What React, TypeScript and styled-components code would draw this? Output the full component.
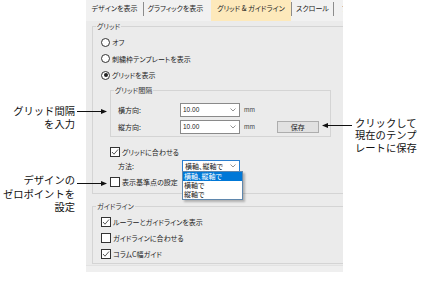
import React from 'react'
import styled, { createGlobalStyle } from 'styled-components'

const GlobalStyle = createGlobalStyle`
  html, body { margin: 0; padding: 0; background: #fff; }
  body { font-family: "Noto Sans CJK JP", "Noto Sans", sans-serif; }
`

const Page = styled.div`
  display: flex;
  width: 435px;
  height: 290px;
  background: #fff;
  overflow: hidden;
`

const LeftNotes = styled.div`
  flex: 0 0 86px;
  box-sizing: border-box;
  padding-right: 11px;
`

const RightNotes = styled.div`
  flex: 1;
  padding-left: 12px;
`

// 注釈テキスト
const Callout = styled.div<{ $align: 'left' | 'right'; $top: number; $lh: number }>`
  position: relative;
  z-index: 2;
  margin-top: ${p => p.$top}px;
  text-align: ${p => p.$align};
  font-size: 10.3px;
  line-height: ${p => p.$lh}px;
  font-weight: 400;
  color: #111;
  white-space: pre;
`

const Arrow = styled.svg<{ $dir: 'left' | 'right'; $top: number }>`
  position: absolute;
  top: ${p => p.$top}px;
  ${p => (p.$dir === 'right' ? 'left: calc(100% + 2px);' : 'left: -33px;')}
`

const Panel = styled.div`
  flex: 0 0 257px;
  height: 272px;
  background: #ebebeb;
  overflow: hidden;
  position: relative;
  font-size: 7px;
  color: #222;
  font-feature-settings: "palt";
`

const TabBar = styled.div`
  display: flex;
  align-items: flex-start;
  height: 21px;
  padding-top: 2px;
  box-sizing: border-box;
  background: #f1f1f1;
`

const Tab = styled.div<{ $w: number; $active?: boolean; $pad?: number }>`
  flex: 0 0 ${p => p.$w}px;
  height: ${p => (p.$active ? '21px' : '12px')};
  margin-top: ${p => (p.$active ? '-2px' : '0')};
  padding-top: ${p => (p.$active ? '2px' : '0')};
  box-sizing: border-box;
  display: flex;
  justify-content: ${p => (p.$pad ? 'flex-start' : 'center')};
  padding-left: ${p => p.$pad || 0}px;
  line-height: 12px;
  white-space: nowrap;
  background: ${p => (p.$active ? '#fde9bb' : 'transparent')};
`

const TabSep = styled.div`
  flex: 0 0 1px;
  height: 14px;
  background: #8c8c8c;
`

const Group = styled.fieldset<{ $w: number; $ml: number; $mt?: number; $pb?: number }>`
  display: block;
  box-sizing: border-box;
  width: ${p => p.$w}px;
  min-width: 0;
  margin: ${p => p.$mt || 0}px 0 0 ${p => p.$ml}px;
  padding: 0 0 ${p => p.$pb || 0}px 3px;
  border: 1px solid #d4d4d4;
`

const Legend = styled.legend`
  padding: 0 1px;
  font-size: 7px;
  line-height: 10px;
  color: #333;
`

const GroupBody = styled.div<{ $pt: number; $pl: number }>`
  padding-top: ${p => p.$pt}px;
  padding-left: ${p => p.$pl}px;
`

const OptionRow = styled.div<{ $h: number; $ml?: number; $mt?: number }>`
  display: flex;
  align-items: center;
  gap: 2px;
  height: ${p => p.$h}px;
  margin-left: ${p => p.$ml || 0}px;
  margin-top: ${p => p.$mt || 0}px;
  white-space: nowrap;
`

const RadioMark = styled.span`
  flex: 0 0 9px;
  width: 9px;
  height: 9px;
  box-sizing: border-box;
  border: 1px solid #333;
  border-radius: 50%;
  background: #fff;
  display: flex;
  align-items: center;
  justify-content: center;
`

const RadioDot = styled.span`
  width: 4px;
  height: 4px;
  border-radius: 50%;
  background: #222;
`

const CheckMark = styled.span`
  flex: 0 0 10px;
  width: 10px;
  height: 10px;
  box-sizing: border-box;
  border: 1px solid #333;
  background: #fff;
  display: flex;
  align-items: center;
  justify-content: center;
`

const FieldRow = styled.div`
  display: flex;
  align-items: center;
  height: 17px;
  padding-left: 4px;
`

const FieldLabel = styled.span`
  flex: 0 0 62px;
`

const Combo = styled.div<{ $w: number; $h: number; $focus?: boolean }>`
  position: relative;
  flex: 0 0 ${p => p.$w}px;
  height: ${p => p.$h}px;
  box-sizing: border-box;
  border: 1px solid ${p => (p.$focus ? '#2a7fd0' : '#8a8a8a')};
  background: #fff;
  display: flex;
  align-items: center;
  justify-content: space-between;
  padding: 0 3px 0 2px;
  white-space: nowrap;
`

const ComboValue = styled.span<{ $latin?: boolean }>`
  font-family: ${p => (p.$latin ? '"Liberation Sans", Arial, sans-serif' : 'inherit')};
  font-size: ${p => (p.$latin ? '6.5px' : '7px')};
  color: #222;
`

const Unit = styled.span`
  margin-left: 4px;
  font-family: "Liberation Sans", Arial, sans-serif;
  font-size: 6.5px;
  color: #444;
`

const Button = styled.div`
  margin-left: 22px;
  flex: 0 0 42px;
  height: 12px;
  box-sizing: border-box;
  border: 1px solid #adadad;
  background: #e1e1e1;
  display: flex;
  align-items: center;
  justify-content: center;
`

const DropList = styled.ul`
  position: absolute;
  top: 100%;
  left: -1px;
  width: 59px;
  margin: 0;
  padding: 0;
  list-style: none;
  background: #fff;
  border: 1px solid #5f87ad;
  box-shadow: 2px 2px 2px rgba(0, 0, 0, 0.25);
  z-index: 5;
`

const DropItem = styled.li<{ $sel?: boolean }>`
  height: 9px;
  line-height: 9px;
  padding-left: 1px;
  font-size: 7px;
  background: ${p => (p.$sel ? '#0078d7' : '#fff')};
  color: ${p => (p.$sel ? '#fff' : '#222')};
`

const Footer = styled.div`
  margin-top: 1px;
  height: 7px;
  background: #efefef;
  border-top: 1px solid #e2e2e2;
`

const Chevron = () => (
  <svg width="6" height="4" viewBox="0 0 6 4">
    <polyline points="0.5,0.5 3,3 5.5,0.5" fill="none" stroke="#777" strokeWidth="0.8" />
  </svg>
)

const Tick = () => (
  <svg width="8" height="8" viewBox="0 0 8 8">
    <polyline points="1,4 3,6.2 7,1.5" fill="none" stroke="#444" strokeWidth="0.9" />
  </svg>
)

const Radio = ({ on, children }: { on?: boolean; children: React.ReactNode }) => (
  <OptionRow $h={16.5}>
    <RadioMark>{on && <RadioDot />}</RadioMark>
    <span>{children}</span>
  </OptionRow>
)

const Check = ({ on, ml, mt, h = 14, children }: { on?: boolean; ml?: number; mt?: number; h?: number; children: React.ReactNode }) => (
  <OptionRow $h={h} $ml={ml} $mt={mt}>
    <CheckMark>{on && <Tick />}</CheckMark>
    <span>{children}</span>
  </OptionRow>
)

const ArrowRight = ({ top }: { top: number }) => (
  <Arrow $dir="right" $top={top} width="30" height="7" viewBox="0 0 30 7">
    <line x1="0" y1="3.5" x2="25" y2="3.5" stroke="#111" strokeWidth="1" />
    <polygon points="24,1 30,3.5 24,6" fill="#111" />
  </Arrow>
)

const ArrowLeft = ({ top }: { top: number }) => (
  <Arrow $dir="left" $top={top} width="30" height="7" viewBox="0 0 30 7">
    <line x1="5" y1="3.5" x2="30" y2="3.5" stroke="#111" strokeWidth="1" />
    <polygon points="6,1 0,3.5 6,6" fill="#111" />
  </Arrow>
)

export default function App() {
  return (
    <>
      <GlobalStyle />
      <Page>
        <LeftNotes>
          <Callout $align="right" $top={103.5} $lh={13}>
            {'グリッド間隔\nを入力'}
            <ArrowRight top={4.5} />
          </Callout>
          <Callout $align="right" $top={43.75} $lh={13.5}>
            {'デザインの\nゼロポイントを\n設定'}
            <ArrowRight top={6.75} />
          </Callout>
        </LeftNotes>

        <Panel>
          <TabBar>
            <Tab $w={57}>デザインを表示</Tab>
            <TabSep />
            <Tab $w={63}>グラフィックを表示</Tab>
            <Tab $w={4} />
            <Tab $w={80} $active>グリッド & ガイドライン</Tab>
            <TabSep />
            <Tab $w={41}>スクロール</Tab>
            <TabSep />
            <Tab $w={40} $pad={8}>フォント</Tab>
          </TabBar>

          <Group $w={262} $ml={6} $pb={4}>
            <Legend>グリッド</Legend>
            <GroupBody $pt={3} $pl={5}>
              <Radio>オフ</Radio>
              <Radio>刺繍枠テンプレートを表示</Radio>
              <Radio on>グリッドを表示</Radio>

              <Group $w={221} $ml={9} $mt={1.5} $pb={1}>
                <Legend>グリッド間隔</Legend>
                <GroupBody $pt={6} $pl={0}>
                  <FieldRow>
                    <FieldLabel>横方向:</FieldLabel>
                    <Combo $w={60} $h={14}>
                      <ComboValue $latin>10.00</ComboValue>
                      <Chevron />
                    </Combo>
                    <Unit>mm</Unit>
                  </FieldRow>
                  <FieldRow>
                    <FieldLabel>縦方向:</FieldLabel>
                    <Combo $w={60} $h={14}>
                      <ComboValue $latin>10.00</ComboValue>
                      <Chevron />
                    </Combo>
                    <Unit>mm</Unit>
                    <Button>保存</Button>
                  </FieldRow>
                </GroupBody>
              </Group>

              <Check on ml={9} mt={8}>グリッドに合わせる</Check>
              <OptionRow $h={14} $ml={17}>
                <FieldLabel>方法:</FieldLabel>
                <Combo $w={58} $h={12} $focus>
                  <ComboValue>横軸、縦軸で</ComboValue>
                  <Chevron />
                  <DropList>
                    <DropItem $sel>横軸、縦軸で</DropItem>
                    <DropItem>横軸で</DropItem>
                    <DropItem>縦軸で</DropItem>
                  </DropList>
                </Combo>
              </OptionRow>
              <Check ml={9} mt={2}>表示基準点の設定</Check>
            </GroupBody>
          </Group>

          <Group $w={262} $ml={6} $mt={7} $pb={1}>
            <Legend>ガイドライン</Legend>
            <GroupBody $pt={3} $pl={5}>
              <Check on h={16}>ルーラーとガイドラインを表示</Check>
              <Check h={16}>ガイドラインに合わせる</Check>
              <Check on h={16}>コラムC幅ガイド</Check>
            </GroupBody>
          </Group>

          <Footer />
        </Panel>

        <RightNotes>
          <Callout $align="left" $top={116.75} $lh={12.5}>
            {'クリックして\n現在のテンプ\nレートに保存'}
            <ArrowLeft top={4.75} />
          </Callout>
        </RightNotes>
      </Page>
    </>
  )
}
